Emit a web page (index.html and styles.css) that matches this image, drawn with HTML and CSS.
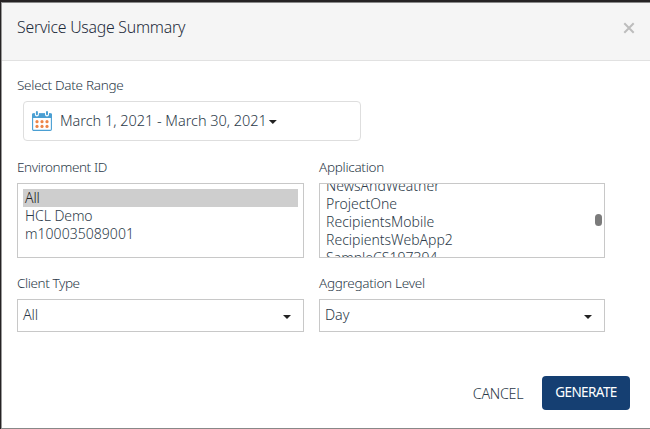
FILE: index.html
```
<!DOCTYPE html>
<html lang="en">
<head>
<meta charset="utf-8">
<title>Service Usage Summary</title>
<link rel="stylesheet" href="styles.css">
</head>
<body>
<main class="dialog">
  <header class="header">
    <h1 class="title">Service Usage Summary</h1>
    <svg class="close" viewBox="0 0 12 12"><path d="M1.300 1.300 10.700 10.700M10.700 1.300 1.300 10.700"/></svg>
  </header>
  <section class="body">
    <div class="label">Select Date Range</div>
    <div class="date-box">
      <svg class="calendar" viewBox="0 0 20 20">
        <rect x=".6" y="3" width="18.8" height="16.4" rx="1.2" fill="#fff" stroke="#4a9fd3" stroke-width="1.1"/>
        <path d="M0 7V3.500Q0 2.300 1.200 2.300H18.800Q20 2.300 20 3.500V7Z" fill="#4a9fd3"/>
        <path d="M4.900 1.200V3.400M15 1.200V3.400" stroke="#fff" stroke-width="4" stroke-linecap="round"/>
        <path d="M4.900 1V3.300M15 1V3.300" stroke="#4a9fd3" stroke-width="2" stroke-linecap="round"/>
        <g fill="#ed8548"><circle cx="5" cy="10.700" r="1.600"/><circle cx="10" cy="10.700" r="1.600"/><circle cx="15" cy="10.700" r="1.600"/><circle cx="5" cy="15.400" r="1.600"/><circle cx="10" cy="15.400" r="1.600"/><circle cx="15" cy="15.400" r="1.600"/></g>
      </svg>
      <span class="date-text">March 1, 2021 - March 30, 2021</span>
      <i class="caret"></i>
    </div>
    <div class="fields">
      <div class="field">
        <div class="label tight">Environment ID</div>
        <ul class="list">
          <li class="option selected">All</li>
          <li class="option">HCL Demo</li>
          <li class="option wide">m100035089001</li>
        </ul>
      </div>
      <div class="field">
        <div class="label">Application</div>
        <div class="list apps">
          <ul class="scrolled">
            <li class="option">NewsAndWeather</li>
            <li class="option">ProjectOne</li>
            <li class="option">RecipientsMobile</li>
            <li class="option">RecipientsWebApp2</li>
            <li class="option">SampleCS197394</li>
          </ul>
          <i class="thumb"></i>
        </div>
      </div>
      <div class="field">
        <div class="label tight">Client Type</div>
        <div class="select">All<i class="caret"></i></div>
      </div>
      <div class="field">
        <div class="label">Aggregation Level</div>
        <div class="select">Day<i class="caret"></i></div>
      </div>
    </div>
  </section>
  <footer class="footer">
    <button class="button cancel">CANCEL</button>
    <button class="button generate">GENERATE</button>
  </footer>
</main>
</body>
</html>
```
FILE: styles.css
```
* { box-sizing: border-box; }
body {
  margin: 0;
  height: 429px;
  padding: 2px 0 0 1px;
  background: #262324;
  overflow: hidden;
  font-family: "Noto Sans", "Open Sans", sans-serif;
  font-weight: 300;
  color: #2c3a49;
}
ul, h1 { margin: 0; padding: 0; list-style: none; font-weight: 300; }
.dialog {
  height: 427px;
  display: flex;
  flex-direction: column;
  background: #fff;
  border-left: 1px solid #999;
  border-top: 1px solid #888;
  border-bottom: 1px solid #888;
}
.header {
  flex: none;
  height: 58px;
  display: flex;
  justify-content: space-between;
  align-items: flex-start;
  padding: 13px 15px 0;
  background: #f5f5f5;
  border-bottom: 1px solid #e1e1e1;
}
.title { font-size: 15.800px; line-height: 22px; letter-spacing: -.23px; color: #1d2b3a; }
.close { width: 12px; height: 12px; margin-top: 6px; stroke: #bdbdbd; stroke-width: 2; fill: none; }
.body { padding: 15px 15px 0; }
.label { height: 20px; font-size: 13.500px; line-height: 19px; letter-spacing: -.28px; }
.tight { letter-spacing: -.4px; }
.date-box {
  width: 338px;
  height: 40px;
  margin: 5px 0 17px 6px;
  padding: 0 8px;
  display: flex;
  align-items: center;
  border: 1px solid #dedede;
  border-radius: 4px;
}
.calendar { width: 20px; height: 20px; margin-top: -1px; }
.date-text { margin: -3px 0 0 8px; font-size: 14.500px; line-height: 20px; letter-spacing: -.03px; white-space: nowrap; }
.caret {
  width: 8px;
  height: 4px;
  background: #222;
  clip-path: polygon(0 0, 100% 0, 50% 100%);
}
.date-box .caret { margin: 2px 0 0 2px; }
.fields { display: grid; grid-template-columns: 287px 286px; grid-template-rows: 116px 58px; column-gap: 15px; }
.list {
  height: 75px;
  margin-top: 5px;
  padding: 5px;
  border: 1px solid #c8c8c8;
  overflow: hidden;
}
.option { height: 18px; padding: 0 2px; font-size: 14px; line-height: 17px; letter-spacing: -.08px; }
.wide { letter-spacing: .04px; }
.selected { background: #cecece; color: #222; }
.apps { display: flex; justify-content: space-between; padding: 0 2px 0 5px; }
.scrolled { margin-top: -7px; }
.apps .option { padding: 0 1px; letter-spacing: 0; }
.thumb { width: 7px; height: 12px; margin-top: 30px; border-radius: 4px; background: #7b7b7b; }
.select {
  height: 33px;
  margin-top: 5px;
  padding: 0 12px 1px 5px;
  display: flex;
  justify-content: space-between;
  align-items: center;
  border: 1px solid #c8c8c8;
  font-size: 14.300px;
  line-height: 20px;
  letter-spacing: -.1px;
}
.select .caret { margin-top: 4px; }
.footer { margin-top: auto; padding: 0 20px 18px; display: flex; justify-content: flex-end; }
.button {
  height: 34px;
  border: 0;
  padding: 0;
  border-radius: 4px;
  background: transparent;
  font: 300 14.300px/34px "Noto Sans", sans-serif;
  letter-spacing: -.3px;
  color: #2c3a49;
}
.cancel { width: 52px; margin-right: 18px; padding-top: 2px; line-height: 32px; }
.generate { width: 88px; padding-bottom: 2px; background: #153f72; color: #fff; font-size: 13.500px; line-height: 32px; font-weight: 400; letter-spacing: -.6px; }
```
